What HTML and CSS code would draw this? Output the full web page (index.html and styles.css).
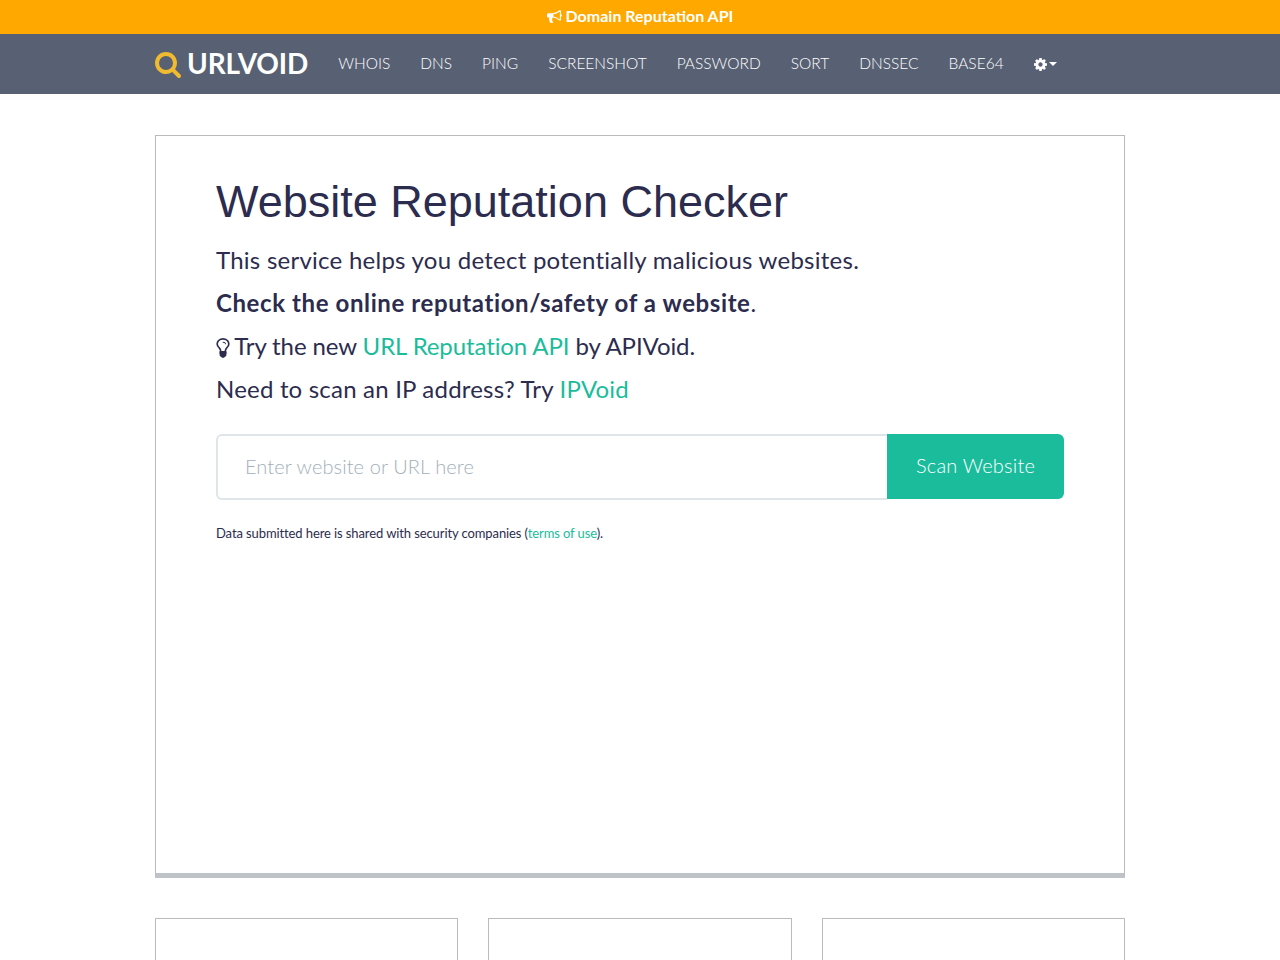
FILE: index.html

```html
<!DOCTYPE html>
<html lang="en">
<head>
  <meta charset="UTF-8">
  <title>URLVoid - Website Reputation Checker</title>
  <link rel="stylesheet" href="styles.css">
</head>
<body>
  <div class="promo">
    <a href="#">
      <svg class="icon" viewBox="0 0 1792 1792"><path d="M1664 640q53 0 90.5 37.5t37.5 90.5-37.5 90.5-90.5 37.5v384q0 52-38 90t-90 38q-417-347-812-380-58 19-91 66t-31 100.5 40 92.5q-20 33-23 65.5t6 58 33.5 55 48 50 61.5 50.5q-29 58-111.5 83t-168.5 11.5-132-55.5q-7-23-29.5-87.5t-32-94.5-23-89-15-101 3.5-98.5 22-110.5h-122q-66 0-113-47t-47-113v-192q0-66 47-113t113-47h480q435 0 896-384 52 0 90 38t38 90v384zm-128 604v-954q-394 302-768 343v270q377 42 768 341z"/></svg>
      Domain Reputation API
    </a>
  </div>

  <nav class="navbar">
    <div class="container nav-inner">
      <a href="#" class="brand">
        <svg class="brand-icon" viewBox="0 0 1792 1792"><path d="M1216 832q0-185-131.5-316.5t-316.5-131.5-316.5 131.5-131.5 316.5 131.5 316.5 316.5 131.5 316.5-131.5 131.5-316.5zm512 832q0 52-38 90t-90 38q-54 0-90-38l-343-342q-179 124-399 124-143 0-273.5-55.5t-225-150-150-225-55.5-273.5 55.5-273.5 150-225 225-150 273.5-55.5 273.5 55.5 225 150 150 225 55.5 273.5q0 220-124 399l343 343q37 37 37 90z"/></svg>
        <span>URLVOID</span>
      </a>
      <ul class="nav-links">
        <li><a href="#">WHOIS</a></li>
        <li><a href="#">DNS</a></li>
        <li><a href="#">PING</a></li>
        <li><a href="#">SCREENSHOT</a></li>
        <li><a href="#">PASSWORD</a></li>
        <li><a href="#">SORT</a></li>
        <li><a href="#">DNSSEC</a></li>
        <li><a href="#">BASE64</a></li>
        <li>
          <a href="#" class="dropdown">
            <svg class="gear" viewBox="128 128 1536 1536"><path d="M1152 896q0-106-75-181t-181-75-181 75-75 181 75 181 181 75 181-75 75-181zm512-109v222q0 12-8 23t-20 13l-185 28q-19 54-39 91 35 50 107 138 10 12 10 25t-9 23q-27 37-99 108t-94 71q-12 0-26-9l-138-108q-44 23-91 38-16 136-29 186-7 28-36 28h-222q-14 0-24.5-8.5t-11.5-21.5l-28-184q-49-16-90-37l-141 107q-10 9-25 9-14 0-25-11-126-114-165-168-7-10-7-23 0-12 8-23 15-21 51-66.5t54-70.5q-27-50-41-99l-183-27q-13-2-21-12.5t-8-23.5v-222q0-12 8-23t19-13l186-28q14-46 39-92-40-57-107-138-10-12-10-24 0-10 9-23 26-36 98.5-107.5t94.5-71.5q13 0 26 10l138 107q44-23 91-38 16-136 29-186 7-28 36-28h222q14 0 24.5 8.5t11.5 21.5l28 184q49 16 90 37l142-107q9-9 24-9 13 0 25 10 129 119 165 170 7 8 7 22 0 12-8 23-15 21-51 66.5t-54 70.5q26 50 41 98l183 28q13 2 21 12.5t8 23.5z"/></svg>
            <span class="caret"></span>
          </a>
        </li>
      </ul>
    </div>
  </nav>

  <main class="container">
    <section class="panel">
      <h1>Website Reputation Checker</h1>
      <p class="lead lead-wide">This service helps you detect potentially malicious websites.</p>
      <p class="lead"><strong>Check the online reputation/safety of a website</strong>.</p>
      <p class="lead lead-tight">
        <svg class="bulb" viewBox="384 120 1024 1550"><path d="M1120 576q0 13-9.5 22.5t-22.5 9.5-22.5-9.5-9.5-22.5q0-46-54-71t-106-25q-13 0-22.5-9.5t-9.5-22.5 9.5-22.5 22.5-9.5q50 0 99.5 16t87 54 37.5 90zm160 0q0-72-34.5-134t-90-101.5-123-62-136.5-22.5-136.5 22.5-123 62-90 101.5-34.5 134q0 101 68 180 10 11 30.5 33t30.5 33q128 153 141 298h228q13-145 141-298 10-11 30.5-33t30.5-33q68-79 68-180zm128 0q0 155-103 268-45 49-74.5 87t-59.5 95.5-34 107.5q47 28 47 82 0 37-25 64 25 27 25 64 0 52-45 81 13 23 13 47 0 46-31.5 71t-77.5 25q-20 44-60 70t-87 26-87-26-60-70q-46 0-77.5-25t-31.5-71q0-24 13-47-45-29-45-81 0-37 25-64-25-27-25-64 0-54 47-82-4-50-34-107.5t-59.5-95.5-74.5-87q-103-113-103-268 0-99 44.5-184.5t117-142 164-89 186.5-32.5 186.5 32.5 164 89 117 142 44.5 184.5z"/></svg>
        Try the new <a href="#">URL Reputation API</a> by APIVoid.
      </p>
      <p class="lead">Need to scan an IP address? Try <a href="#">IPVoid</a></p>

      <form class="scan-form">
        <input type="text" class="scan-input" placeholder="Enter website or URL here">
        <button type="button" class="scan-btn">Scan Website</button>
      </form>

      <p class="note">Data submitted here is shared with security companies (<a href="#">terms of use</a>).</p>
    </section>

    <div class="cards">
      <div class="card"></div>
      <div class="card"></div>
      <div class="card"></div>
    </div>
  </main>
</body>
</html>
```

FILE: styles.css

```css
* {
  box-sizing: border-box;
}

html, body {
  height: 960px;
  overflow: hidden;
}

body {
  margin: 0;
  background: #fff;
  color: #2c2c4e;
  font-family: Lato, 'Noto Sans', sans-serif;
}

a {
  color: #1abc9c;
  text-decoration: none;
}

.container {
  width: 970px;
  margin: 0 auto;
}

.icon {
  width: 15px;
  height: 15px;
  fill: currentColor;
  vertical-align: -2px;
}

.promo {
  height: 34px;
  background: #ffa800;
  text-align: center;
  font-size: 16px;
  font-weight: 700;
  line-height: 32px;
}

.promo a {
  color: #fff;
}

.navbar {
  height: 60px;
  background: #586174;
}

.nav-inner {
  display: flex;
  align-items: center;
  height: 60px;
}

.brand {
  display: flex;
  align-items: center;
  color: #fff;
  font-size: 28px;
  font-weight: 700;
  line-height: 56px;
  letter-spacing: -.1px;
}

.brand span {
  margin-bottom: 2px;
}

.brand-icon {
  width: 28px;
  height: 28px;
  margin-right: 4px;
  fill: #f0bb2e;
  transform: translateX(-1px);
}

.nav-links {
  display: flex;
  list-style: none;
  margin: 0 0 0 15px;
  padding: 0;
}

.nav-links a {
  display: block;
  padding: 0 15px;
  color: #fff;
  font-size: 15.5px;
  font-weight: 300;
  line-height: 56px;
}

.nav-links .dropdown {
  display: flex;
  align-items: center;
  height: 58px;
}

.gear {
  width: 13px;
  height: 13px;
  fill: currentColor;
}

.caret {
  margin-left: 2px;
  border-top: 4px solid #fff;
  border-left: 4px solid transparent;
  border-right: 4px solid transparent;
}

.panel {
  height: 743px;
  margin-top: 41px;
  padding: 37px 60px 0;
  border: 1px solid #bbb;
  border-bottom: 5px solid #bdc3c7;
}

h1 {
  margin: 0 0 13px;
  font-family: 'Liberation Sans', Arial, sans-serif;
  font-size: 45px;
  font-weight: 400;
  line-height: 58px;
}

.lead {
  margin: 0 0 12px;
  font-size: 24px;
  line-height: 31px;
  letter-spacing: .2px;
}

.lead strong {
  font-weight: 700;
  letter-spacing: .6px;
}

.lead-wide {
  letter-spacing: .25px;
}

.lead-tight {
  letter-spacing: -.1px;
}

.bulb {
  width: 14px;
  height: 20px;
  margin-right: -1px;
  fill: currentColor;
  vertical-align: -3px;
}

.scan-form {
  display: flex;
  margin-top: 30px;
}

.scan-input {
  flex: 1;
  height: 66px;
  padding: 0 27px 2px;
  border: 2px solid #dfe5e8;
  border-right: 0;
  border-radius: 6px 0 0 6px;
  color: #2c2c4e;
  font-family: inherit;
  font-size: 20px;
  font-weight: 300;
  letter-spacing: .1px;
}

.scan-input::placeholder {
  color: #a3afb9;
}

.scan-btn {
  width: 177px;
  height: 65px;
  padding: 0 0 3px;
  border: 0;
  border-radius: 0 6px 6px 0;
  background: #1abc9c;
  color: #fff;
  font-family: inherit;
  font-size: 20px;
  font-weight: 300;
  letter-spacing: .2px;
}

.note {
  margin: 25px 0 0;
  font-size: 13px;
  line-height: 17px;
  letter-spacing: -.1px;
}

.cards {
  display: grid;
  grid-template-columns: repeat(3, 1fr);
  gap: 30px;
  margin-top: 40px;
}

.card {
  height: 280px;
  border: 1px solid #bbb;
}
```
